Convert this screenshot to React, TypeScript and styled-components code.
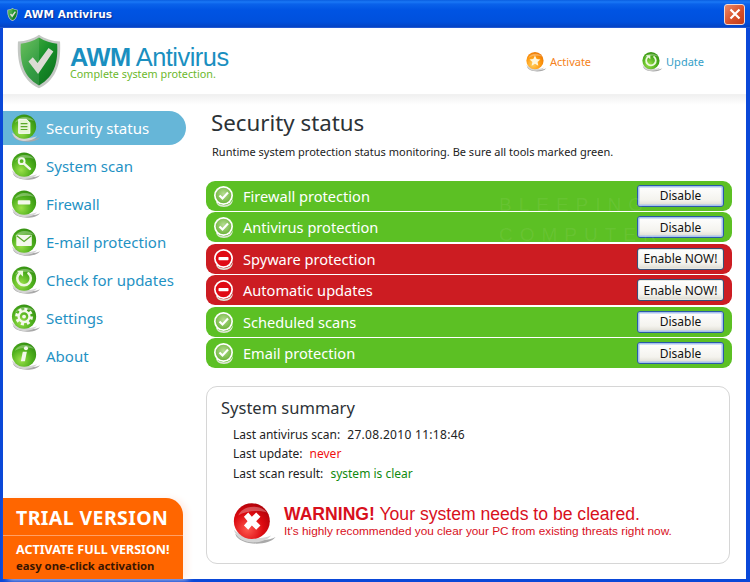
import React from "react";
import styled, { createGlobalStyle } from "styled-components";

const GlobalStyle = createGlobalStyle`
  html, body {
    margin: 0;
    padding: 0;
    background: #fff;
  }
  body {
    font-family: "Noto Sans", "DejaVu Sans", sans-serif;
  }
`;

const Window = styled.div`
  width: 750px;
  height: 582px;
  box-sizing: border-box;
  display: flex;
  flex-direction: column;
  position: relative;
  overflow: hidden;
  background: #0a48d8;
  padding: 0 4px 3px 3px;
`;

const TitleBar = styled.div`
  height: 28px;
  margin: 0 -4px 0 -3px;
  padding: 0 5px 0 7px;
  display: flex;
  align-items: center;
  flex-shrink: 0;
  background: linear-gradient(#0a5ee0 0, #1a78f6 2px, #0a62ea 4px, #0054e3 10px, #0050dc 22px, #0443c4 27px, #3f6fe0 28px);
`;

const TitleText = styled.span`
  margin-left: 6px;
  color: #fff;
  font-family: "DejaVu Sans", sans-serif;
  font-size: 10.5px;
  font-weight: 700;
  letter-spacing: 0.1px;
  text-shadow: 1px 1px 1px #0a2a90;
`;

const CloseButton = styled.div`
  margin-left: auto;
  width: 19px;
  height: 19px;
  border: 1px solid #f4d9d0;
  border-radius: 3px;
  background: linear-gradient(135deg, #ea8a68, #d8512a 55%, #c23c18);
  display: flex;
  align-items: center;
  justify-content: center;
`;

const Client = styled.div`
  flex: 1;
  background: #fff;
  display: flex;
  flex-direction: column;
  min-height: 0;
`;

const Header = styled.header`
  height: 67px;
  flex-shrink: 0;
  display: flex;
  align-items: center;
  padding-left: 14px;
  box-sizing: border-box;
  border-bottom: 1px solid #f1f1f1;
`;

const Brand = styled.div`
  margin: 3px 0 0 9px;
  display: flex;
  flex-direction: column;
`;

const BrandName = styled.div`
  font-family: "Liberation Sans", Arial, sans-serif;
  font-size: 25.4px;
  line-height: 22px;
  letter-spacing: -0.5px;
  color: #1a8fc0;
  b {
    font-weight: 700;
  }
`;

const BrandTag = styled.div`
  font-size: 10.8px;
  line-height: 12px;
  color: #6cb82c;
`;

const HeaderLinks = styled.div`
  margin-left: auto;
  padding-right: 42px;
  display: flex;
  gap: 50px;
  margin-top: 1px;
`;

const HeaderLink = styled.div<{ $color: string }>`
  display: flex;
  align-items: center;
  gap: 3px;
  font-size: 11px;
  color: ${(p) => p.$color};
`;

const Fade = styled.div`
  height: 10px;
  flex-shrink: 0;
  background: linear-gradient(#f0f0f0, #fff);
`;

const Body = styled.div`
  flex: 1;
  min-height: 0;
  display: flex;
`;

const Sidebar = styled.nav`
  width: 187px;
  flex-shrink: 0;
  display: flex;
  flex-direction: column;
  padding-top: 6px;
`;

const MenuItem = styled.div<{ $active?: boolean }>`
  height: 34px;
  width: 183px;
  margin-bottom: 4px;
  box-sizing: border-box;
  padding-left: 7px;
  display: flex;
  align-items: center;
  gap: 5px;
  border-radius: 0 17px 17px 0;
  font-size: 15px;
  color: ${(p) => (p.$active ? "#fff" : "#1f92c4")};
  background: ${(p) => (p.$active ? "#66b6d8" : "transparent")};
`;

const TrialBox = styled.div`
  margin-top: auto;
  width: 180px;
  height: 81px;
  box-sizing: border-box;
  background: #ff6600;
  border-top-right-radius: 17px;
  box-shadow: 5px 0 6px #fff0ea;
  color: #fff;
  font-weight: 700;
`;

const TrialTitle = styled.div`
  height: 38px;
  box-sizing: border-box;
  padding: 8px 0 0 13px;
  font-size: 19.5px;
  line-height: 24px;
  letter-spacing: 0.4px;
  border-bottom: 1px solid #ffa066;
`;

const TrialLine = styled.div<{ $dark?: boolean }>`
  padding-left: 13px;
  font-size: ${(p) => (p.$dark ? "11.3px" : "12.5px")};
  line-height: 16px;
  color: ${(p) => (p.$dark ? "#3a1500" : "#fff")};
  &:nth-child(2) {
    margin-top: 6px;
  }
`;

const Main = styled.main`
  flex: 1;
  min-width: 0;
  position: relative;
  padding: 2px 14px 0 16px;
  display: flex;
  flex-direction: column;
`;

const PageTitle = styled.h1`
  margin: 0 0 0 5px;
  font-size: 22.3px;
  line-height: 32px;
  font-weight: 400;
  color: #2c3236;
`;

const PageSub = styled.p`
  margin: 5px 0 0 6px;
  font-size: 11px;
  line-height: 16px;
  color: #222;
`;

const StatusList = styled.div`
  margin-top: 20.5px;
  display: flex;
  flex-direction: column;
  gap: 1.5px;
`;

const StatusRow = styled.div<{ $ok: boolean }>`
  height: 30px;
  box-sizing: border-box;
  padding: 0 8px 0 7px;
  display: flex;
  align-items: center;
  gap: 8px;
  border-radius: 9px;
  color: #fff;
  font-size: 14.6px;
  background: ${(p) => (p.$ok ? "#5cc024" : "#cc1c22")};
`;

const RowButton = styled.button<{ $ok: boolean }>`
  margin-left: auto;
  width: 87px;
  height: 22px;
  padding: 0;
  font-family: "Noto Sans", sans-serif;
  font-size: 12px;
  color: #111;
  border: 1px solid ${(p) => (p.$ok ? "#2a5aa8" : "#34507a")};
  border-radius: 3px;
  background: linear-gradient(#fff, #f4f3ee 70%, #dcdad0);
  box-shadow: ${(p) => (p.$ok ? "inset 0 0 0 1.5px #a6c2ee" : "inset 0 0 0 1px #e8e8e2")};
`;

const Watermark = styled.div`
  position: absolute;
  left: 309px;
  top: 85px;
  font-family: "Liberation Sans", sans-serif;
  font-size: 19px;
  line-height: 30px;
  letter-spacing: 7px;
  color: rgba(255, 255, 255, 0.07);
  pointer-events: none;
`;

const SummaryCard = styled.section`
  margin: 17.5px 2px 0 0;
  height: 178px;
  box-sizing: border-box;
  border: 1px solid #d6d6d6;
  border-radius: 11px;
  padding: 9px 0 0 14px;
`;

const SummaryTitle = styled.h2`
  margin: 0;
  font-size: 16.5px;
  line-height: 24px;
  font-weight: 400;
  color: #2c3236;
`;

const SummaryRows = styled.div`
  margin: 5px 0 0 12px;
  font-size: 12px;
  line-height: 19.5px;
  color: #222;
`;

const Value = styled.span<{ $color?: string; $wide?: boolean }>`
  margin-left: 4px;
  letter-spacing: ${(p) => (p.$wide ? "0.3px" : "0")};
  color: ${(p) => p.$color || "#222"};
`;

const WarningRow = styled.div`
  margin: 18px 0 0 10px;
  display: flex;
  align-items: flex-start;
`;

const WarningText = styled.div`
  margin: 3px 0 0 7px;
  font-family: "Liberation Sans", Arial, sans-serif;
  color: #d8101c;
`;

const WarningHead = styled.div`
  font-size: 17.6px;
  line-height: 20px;
  b {
    font-weight: 700;
  }
`;

const WarningSub = styled.div`
  font-size: 11.8px;
  line-height: 15px;
`;

type Tone = "green" | "orange" | "red";

const tones: Record<Tone, [string, string, string]> = {
  green: ["#9be04a", "#4fb01c", "#2f8a10"],
  orange: ["#ffd060", "#ff9a10", "#e87000"],
  red: ["#ff5a50", "#dc0a10", "#a80008"],
};

// glossy ball with the grey drop shadow under it, used by the menu and header icons
const Orb = ({ size, tone = "green", children }: { size: number; tone?: Tone; children?: React.ReactNode }) => {
  const [a, b, c] = tones[tone];
  const id = `orb-${tone}`;
  return (
    <svg width={size} height={size} viewBox="0 0 32 32" style={{ flexShrink: 0 }}>
      <defs>
        <radialGradient id={id} cx="0.38" cy="0.72" r="0.8">
          <stop offset="0" stopColor={a} />
          <stop offset="0.55" stopColor={b} />
          <stop offset="1" stopColor={c} />
        </radialGradient>
      </defs>
      <path d="M3 23 C5 31 26 32 31 25 C26 28 14 28 3 23Z" fill="#a9a9a9" />
      <path d="M2 20 C5 31 22 31 28 24 C20 27 10 27 2 20Z" fill="#d4d4d4" />
      <circle cx="14.5" cy="14" r="12.5" fill={`url(#${id})`} />
      <path d="M5 10 C8 3 20 2 25 8 C18 6 10 7 5 10Z" fill="#fff" opacity="0.3" />
      {children}
    </svg>
  );
};

const DocGlyph = () => (
  <g>
    <path d="M9 6.500h8l3.500 3.500v11H9z" fill="#e6f5d5" stroke="#fff" />
    <path d="M11 11h7M11 14h7M11 17h7" stroke="#5aa82a" strokeWidth="1.2" />
  </g>
);
const SearchGlyph = () => (
  <g fill="none" stroke="#f2f8ea">
    <circle cx="12" cy="10.500" r="3" strokeWidth="2" />
    <path d="M14.500 13l6 5.500" strokeWidth="2.6" strokeLinecap="round" />
  </g>
);
const MinusGlyph = () => <rect x="8" y="11.500" width="13" height="4.500" rx="1" fill="#f4f8ec" />;
const MailGlyph = () => (
  <g>
    <rect x="6.500" y="8" width="16" height="11.500" rx="1" fill="#f4f8ec" />
    <path d="M7 9l7.500 6 7.500-6" fill="none" stroke="#5aa82a" strokeWidth="1.3" />
  </g>
);
const RefreshGlyph = () => (
  <g>
    <path d="M10 8.500a7 7 0 1 0 9 0" fill="none" stroke="#eef8e0" strokeWidth="2.6" strokeLinecap="round" />
    <path d="M7 6h6.500v6z" fill="#eef8e0" />
  </g>
);
const GearGlyph = () => (
  <g>
    <circle cx="14.500" cy="14" r="7.500" fill="none" stroke="#f4f8ec" strokeWidth="3.4" strokeDasharray="3 2.9" />
    <circle cx="14.500" cy="14" r="5.600" fill="none" stroke="#f4f8ec" strokeWidth="2.4" />
    <circle cx="14.500" cy="14" r="2" fill="#f4f8ec" />
  </g>
);
const InfoGlyph = () => (
  <g fill="#f4f8ec">
    <circle cx="16.500" cy="7.500" r="2.100" />
    <path d="M13.200 11h4.200l-2 10h-4.200z" />
  </g>
);
const StarGlyph = () => (
  <path d="M14.500 6.500l2.400 5 5.400.7-4 3.700 1 5.400-4.800-2.700-4.800 2.700 1-5.400-4-3.700 5.400-.7z" fill="#fff6dc" />
);

const RowIcon = ({ ok }: { ok: boolean }) => (
  <svg width="22" height="22" viewBox="0 0 22 22" style={{ flexShrink: 0 }}>
    <defs>
      <radialGradient id="row-ok" cx="0.5" cy="0.4" r="0.6">
        <stop offset="0" stopColor="#b4dc90" />
        <stop offset="1" stopColor="#6eb43c" />
      </radialGradient>
    </defs>
    <path d="M3 16a9.600 9.600 0 0 0 17-2c0 5-4 8-9 8s-8-3-8-6z" fill="#dfe6d6" />
    <circle cx="10.500" cy="10.500" r="9.500" fill="#fff" />
    <circle cx="10.500" cy="10.500" r="7.800" fill={ok ? "url(#row-ok)" : "#e00a14"} />
    {ok ? (
      <path d="M6.500 10.500l3 3 5.500-6" fill="none" stroke="#fff" strokeWidth="2.2" />
    ) : (
      <rect x="5.500" y="9" width="10" height="3.200" rx="0.8" fill="#fff" />
    )}
  </svg>
);

const Shield = ({ width, height }: { width: number; height: number }) => (
  <svg width={width} height={height} viewBox="0 0 46 56" style={{ flexShrink: 0 }}>
    <defs>
      <linearGradient id="shield-fill" x1="0" y1="0" x2="1" y2="1">
        <stop offset="0" stopColor="#58b848" />
        <stop offset="0.5" stopColor="#18902a" />
        <stop offset="1" stopColor="#0c6c1c" />
      </linearGradient>
    </defs>
    <path d="M23 0C17 4 9 7 1 7c-1 20 2 39 22 49 20-10 23-29 22-49-8 0-16-3-22-7z" fill="#c4c8c4" />
    <path d="M23 3C17 7 10 9 4 9.500c-1 18 2 34 19 43.500 17-9.500 20-25.500 19-43.500C36 9 29 7 23 3z" fill="url(#shield-fill)" />
    <path d="M23 3v50C6 43.500 3 27.500 4 9.500 10 9 17 7 23 3z" fill="#fff" opacity="0.12" />
    <path d="M12 28l4.500-4.500 5 6L33 14l5 3.500L22 41z" fill="#dcdcd4" />
  </svg>
);

const rows = [
  { name: "Firewall protection", ok: true },
  { name: "Antivirus protection", ok: true },
  { name: "Spyware protection", ok: false },
  { name: "Automatic updates", ok: false },
  { name: "Scheduled scans", ok: true },
  { name: "Email protection", ok: true },
];

const menu: { label: string; glyph: React.ReactNode; active?: boolean }[] = [
  { label: "Security status", glyph: <DocGlyph />, active: true },
  { label: "System scan", glyph: <SearchGlyph /> },
  { label: "Firewall", glyph: <MinusGlyph /> },
  { label: "E-mail protection", glyph: <MailGlyph /> },
  { label: "Check for updates", glyph: <RefreshGlyph /> },
  { label: "Settings", glyph: <GearGlyph /> },
  { label: "About", glyph: <InfoGlyph /> },
];

const App = () => (
  <Window>
    <GlobalStyle />
    <TitleBar>
      <Shield width={11} height={13} />
      <TitleText>AWM Antivirus</TitleText>
      <CloseButton>
        <svg width="12" height="12" viewBox="0 0 12 12">
          <path d="M1.500 1.500l9 9M10.500 1.500l-9 9" stroke="#fff" strokeWidth="2.2" />
        </svg>
      </CloseButton>
    </TitleBar>
    <Client>
      <Header>
        <Shield width={44} height={55} />
        <Brand>
          <BrandName>
            <b>AWM</b> Antivirus
          </BrandName>
          <BrandTag>Complete system protection.</BrandTag>
        </Brand>
        <HeaderLinks>
          <HeaderLink $color="#f58220">
            <Orb size={22} tone="orange">
              <StarGlyph />
            </Orb>
            Activate
          </HeaderLink>
          <HeaderLink $color="#35a0c8">
            <Orb size={22}>
              <RefreshGlyph />
            </Orb>
            Update
          </HeaderLink>
        </HeaderLinks>
      </Header>
      <Fade />
      <Body>
        <Sidebar>
          {menu.map((item) => (
            <MenuItem key={item.label} $active={item.active}>
              <Orb size={31}>{item.glyph}</Orb>
              {item.label}
            </MenuItem>
          ))}
          <TrialBox>
            <TrialTitle>TRIAL VERSION</TrialTitle>
            <TrialLine>ACTIVATE FULL VERSION!</TrialLine>
            <TrialLine $dark>easy one-click activation</TrialLine>
          </TrialBox>
        </Sidebar>
        <Main>
          <PageTitle>Security status</PageTitle>
          <PageSub>Runtime system protection status monitoring. Be sure all tools marked green.</PageSub>
          <StatusList>
            {rows.map((row) => (
              <StatusRow key={row.name} $ok={row.ok}>
                <RowIcon ok={row.ok} />
                {row.name}
                <RowButton $ok={row.ok}>{row.ok ? "Disable" : "Enable NOW!"}</RowButton>
              </StatusRow>
            ))}
          </StatusList>
          <Watermark>
            BLEEPING
            <br />
            COMPUTER
          </Watermark>
          <SummaryCard>
            <SummaryTitle>System summary</SummaryTitle>
            <SummaryRows>
              <div>
                Last antivirus scan: <Value $wide>27.08.2010 11:18:46</Value>
              </div>
              <div>
                Last update: <Value $color="#f01010">never</Value>
              </div>
              <div>
                Last scan result: <Value $color="#108a10">system is clear</Value>
              </div>
            </SummaryRows>
            <WarningRow>
              <Orb size={46} tone="red">
                <path d="M9 11l3-3 2.500 3 3-3 3 3-3 3 3 3-3 3-3-3-2.500 3-3-3 2.500-3z" fill="#fff" />
              </Orb>
              <WarningText>
                <WarningHead>
                  <b>WARNING!</b> Your system needs to be cleared.
                </WarningHead>
                <WarningSub>It&apos;s highly recommended you clear your PC from existing threats right now.</WarningSub>
              </WarningText>
            </WarningRow>
          </SummaryCard>
        </Main>
      </Body>
    </Client>
  </Window>
);

export default App;
